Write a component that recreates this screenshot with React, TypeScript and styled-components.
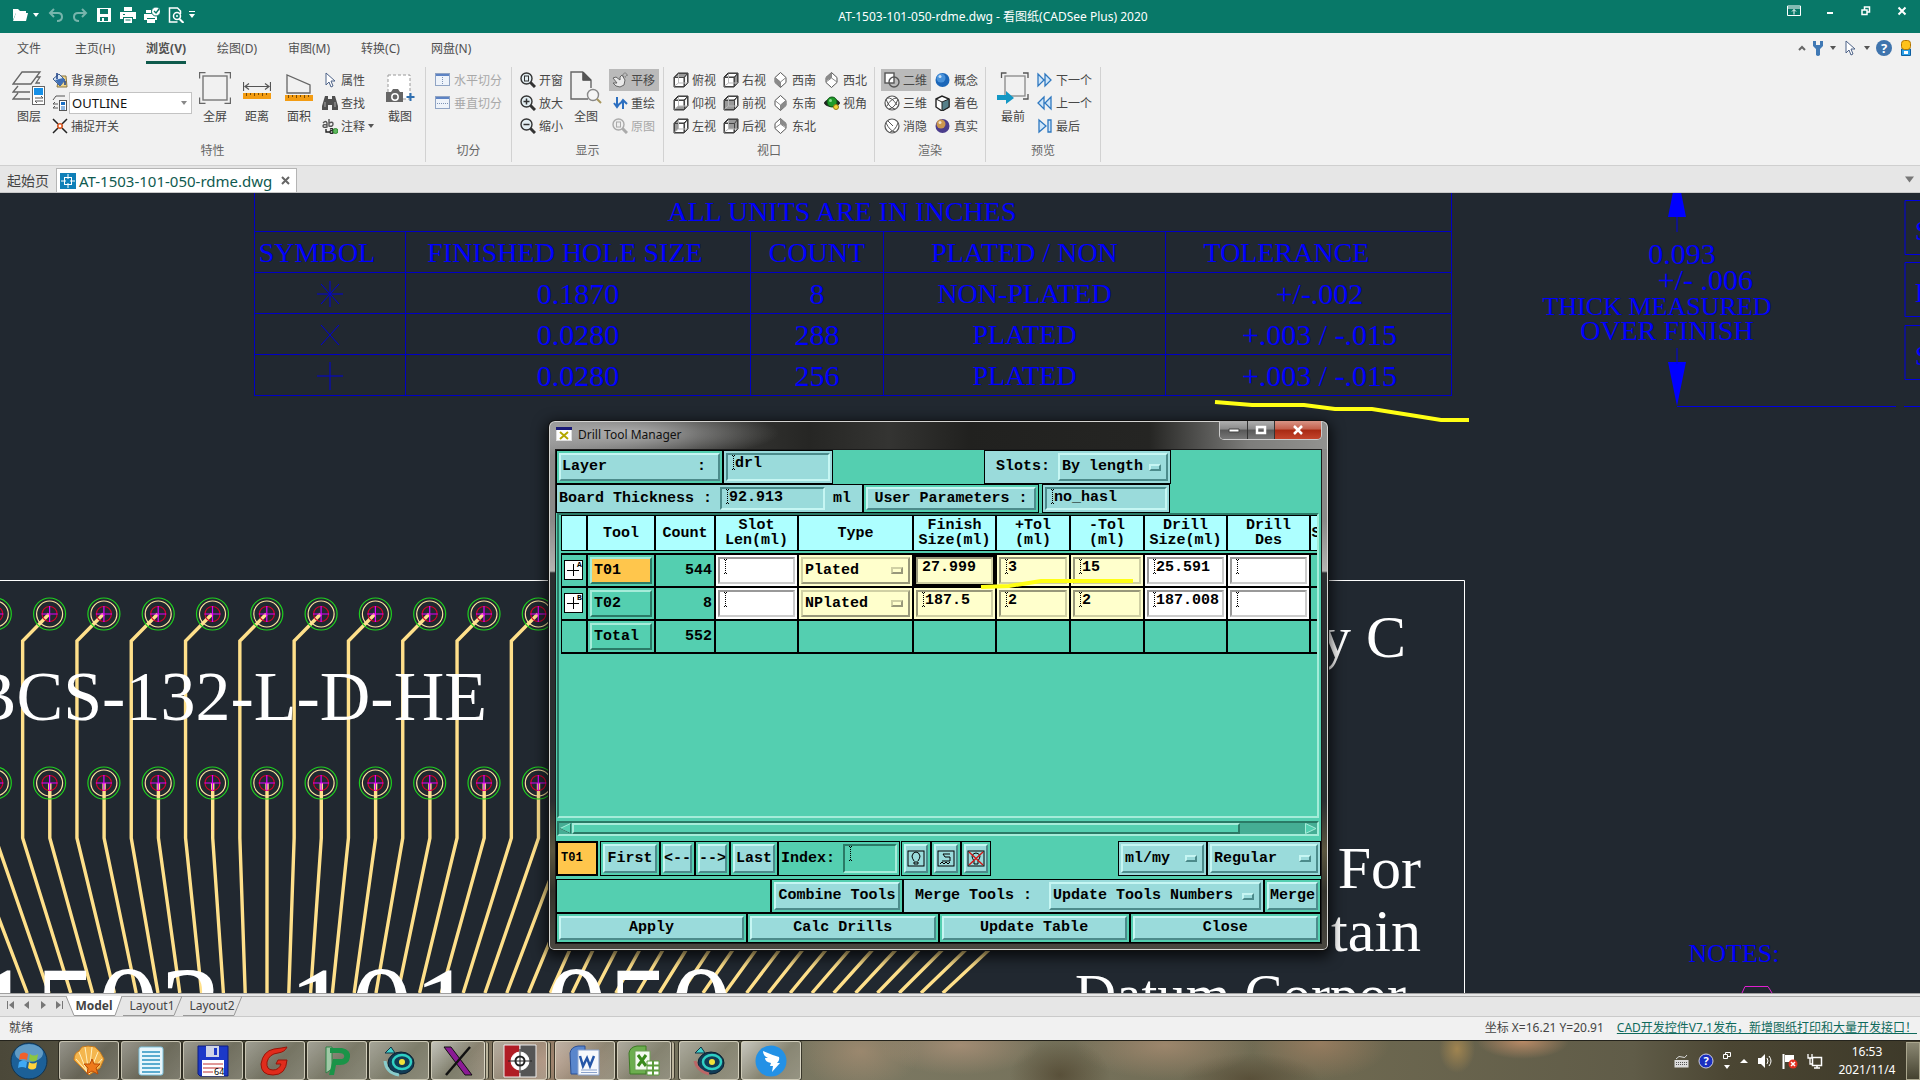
import React, { ReactNode } from 'react';
import styled, { createGlobalStyle, css } from 'styled-components';

const ui = `"Noto Sans", "Noto Sans CJK SC", sans-serif`;
const mono = `"Liberation Mono", "Noto Sans CJK SC", monospace`;
const cad = `"Liberation Serif", "Noto Sans CJK SC", serif`;

const Global = createGlobalStyle`
  *, *::before, *::after { box-sizing: border-box; }
  html, body { margin: 0; height: 100%; overflow: hidden; }
  button, input, select { font: inherit; color: inherit; margin: 0; padding: 0; border: 0; background: none; border-radius: 0; outline: 0; }
  svg { display: block; flex: none; }
`;

const Page = styled.div`
  display: flex;
  flex-direction: column;
  height: 100vh;
  min-height: 600px;
  overflow: hidden;
  font-family: ${ui};
  font-size: 12px;
  color: #444;
  background: #f1f1f1;
`;

/* ---------- title bar ---------- */
const TitleBar = styled.header`
  flex: none;
  display: grid;
  grid-template-columns: 214px 1fr 148px;
  height: 33px;
  background: #087868;
  color: #fff;
`;
const QuickBar = styled.div`
  display: flex;
  align-items: center;
  gap: 8px;
  padding: 0 0 4px 12px;
`;
const QuickButton = styled.button<{ $dim?: boolean; $narrow?: boolean }>`
  display: grid;
  place-items: center;
  width: ${p => (p.$narrow ? 8 : 16)}px;
  height: 20px;
  margin-left: ${p => (p.$narrow ? -4 : 0)}px;
  opacity: ${p => (p.$dim ? 0.45 : 1)};
`;
const TitleText = styled.h1`
  margin: 0;
  font-size: 12px;
  font-weight: 400;
  line-height: 33px;
  text-align: center;
  white-space: nowrap;
`;
const WindowButtons = styled.div`
  display: flex;
  justify-content: flex-end;
`;
const WindowButton = styled.button`
  display: grid;
  place-items: center;
  width: 36px;
  height: 21px;
`;

/* ---------- menu ---------- */
const MenuBar = styled.nav`
  flex: none;
  display: flex;
  align-items: stretch;
  height: 34px;
  padding: 0 6px 0 17px;
  gap: 31px;
`;
const MenuTab = styled.button<{ $active?: boolean }>`
  height: 31px;
  padding-top: 4px;
  line-height: 24px;
  white-space: nowrap;
  color: #505050;
  border-bottom: 3px solid ${p => (p.$active ? '#0f5a4c' : 'transparent')};
  font-weight: ${p => (p.$active ? 700 : 400)};
  &:first-child { margin-right: 3px; }
`;
const MenuTools = styled.div`
  display: flex;
  align-items: center;
  gap: 6px;
  margin-left: auto;
  padding-bottom: 4px;
`;
const ToolButton = styled.button`
  display: grid;
  place-items: center;
`;

/* ---------- ribbon ---------- */
const RibbonBar = styled.section`
  flex: none;
  display: flex;
  height: 98px;
`;
const Group = styled.div<{ $w: number }>`
  display: flex;
  flex-direction: column;
  width: ${p => p.$w}px;
  height: 95px;
  border-right: 1px solid #d2d2d2;
`;
const GroupBody = styled.div<{ $pad: number; $gap?: number }>`
  display: flex;
  flex: none;
  height: 71px;
  padding: 2px 0 0 ${p => p.$pad}px;
  gap: ${p => p.$gap ?? 4}px;
`;
const GroupLabel = styled.div`
  padding-top: 3px;
  line-height: 20px;
  text-align: center;
  color: #666;
`;
const LargeButton = styled.button`
  display: flex;
  flex-direction: column;
  align-items: center;
  width: 38px;
  height: 60px;
  line-height: 22px;
`;
const IconSlot = styled.span`
  display: grid;
  place-items: center;
  width: 36px;
  height: 37px;
`;
const Stack = styled.div<{ $w: number }>`
  display: flex;
  flex-direction: column;
  gap: 1px;
  width: ${p => p.$w}px;
`;
const SmallButton = styled.button<{ $on?: boolean; $off?: boolean; $flush?: boolean }>`
  display: flex;
  align-items: center;
  gap: 3px;
  height: 22px;
  padding: 0 ${p => (p.$flush ? 0 : 3)}px;
  white-space: nowrap;
  background: ${p => (p.$on ? '#bababa' : 'transparent')};
  color: ${p => (p.$off ? '#a8a8a8' : '#484848')};
`;
const StyleRow = styled.label`
  display: flex;
  align-items: center;
  gap: 1px;
  height: 22px;
`;
const StyleBox = styled.span`
  display: flex;
  align-items: center;
  flex: 1;
  height: 22px;
  padding-right: 4px;
  border: 1px solid #c3c3c3;
  background: #fff;
`;
const StyleSelect = styled.select`
  flex: 1;
  appearance: none;
  padding-left: 2px;
  font-size: 13px;
  color: #111;
`;

/* ---------- document tabs ---------- */
const DocTabs = styled.div`
  flex: none;
  display: flex;
  align-items: flex-end;
  height: 28px;
  padding-right: 6px;
  border-top: 1px solid #cfcfcf;
  border-bottom: 1px solid #c8c8c8;
  background: #e6e6e6;
`;
const StartTab = styled.button`
  width: 56px;
  height: 24px;
  font-size: 14px;
`;
const DocTab = styled.div`
  display: flex;
  align-items: center;
  gap: 3px;
  width: 241px;
  height: 24px;
  padding: 0 6px 0 3px;
  border: 1px solid #b5b5b5;
  border-bottom: 0;
  background: #fff;
  color: #0f5a50;
  font-size: 15px;
`;
const DocName = styled.button`
  flex: 1;
  text-align: left;
  line-height: 22px;
`;
const TabsMore = styled.button`
  align-self: center;
  margin-left: auto;
`;

/* ---------- drawing area ---------- */
const Workspace = styled.main`
  position: relative;
  flex: 1;
  min-height: 0;
  overflow: hidden;
  background: #212830;
`;
const Sheet = styled.svg`
  position: absolute;
  inset: 0;
  width: 100%;
  height: 100%;
  font-family: ${cad};
`;
const HoleChart = styled.table`
  position: absolute;
  left: 254px;
  top: -3px;
  width: 1198px;
  table-layout: fixed;
  border-collapse: collapse;
  font-family: ${cad};
  font-size: 28px;
  line-height: 32px;
  color: #0000ff;
  white-space: nowrap;
  th, td {
    height: 41px;
    padding: 5px 0 3px;
    border: 1px solid #0000c4;
    font-weight: 400;
    text-align: center;
  }
  td:not(:nth-child(4)) { font-size: 30px; }
  th[scope='colgroup'] { padding-right: 22px; }
  th[scope='col']:first-child, th[scope='col']:nth-child(2) { padding-right: 26px; }
  th[scope='col']:last-child { padding-right: 44px; }
  td:last-child { padding-left: 22px; }
  caption { display: none; }
`;
const Mark = styled.svg`
  margin: 0 auto;
`;

/* ---------- drill tool manager ---------- */
const GREEN = '#54cfb0';
const PALE = '#9adbdb';
const CREAM = '#ffffcc';

const Dialog = styled.section`
  position: absolute;
  left: 549px;
  top: 228px;
  width: 779px;
  padding: 0 6px 6px;
  border-radius: 6px 6px 5px 5px;
  background:
    radial-gradient(ellipse 150px 26px at 80px 12px, rgba(200, 200, 200, 0.75), transparent),
    linear-gradient(90deg, #8c8c8c 0, #3c3c3a 150px, #262624 260px, #343432 340px, #21211f 420px, #252523 600px, #7d7d7b 700px, #929290 100%) 0 0 / 100% 28px no-repeat,
    linear-gradient(180deg, #8a8a88 0, #8a8a88 100px, #b4b4b2 150px, #2b2e30 152px, #2b2f31 380px, #5b563f 430px, #34332c 470px, #4a4740 100%);
  box-shadow: inset 0 0 0 1px #d4d4d2, 0 0 0 1px #111, 0 4px 14px 3px rgba(0, 0, 0, 0.75);
  color: #000;
`;
const DialogTitle = styled.div`
  display: flex;
  align-items: flex-start;
  height: 28px;
`;
const DialogName = styled.h2`
  display: flex;
  align-items: center;
  gap: 6px;
  flex: 1;
  margin: 0;
  padding-left: 1px;
  height: 26px;
  font-size: 12px;
  font-weight: 400;
  color: #111;
`;
const Caption = styled.div`
  display: flex;
  height: 19px;
  border: 1px solid #ccc;
  border-top: 0;
  border-radius: 0 0 5px 5px;
  overflow: hidden;
`;
const CaptionButton = styled.button<{ $close?: boolean }>`
  display: grid;
  place-items: center;
  width: ${p => (p.$close ? 47 : 27)}px;
  background: ${p => (p.$close ? 'linear-gradient(#d99485 0, #c4604c 45%, #a82912 50%, #c4452c)' : 'linear-gradient(#b0b0b0 0, #8a8a8a 45%, #585858 50%, #777)')};
  & + & { border-left: 1px solid #333; }
`;
const Client = styled.div`
  display: flex;
  flex-direction: column;
  border: 1px solid #1b1b1b;
  background: ${GREEN};
  font-family: ${mono};
  font-size: 15px;
  font-weight: 700;
  line-height: 18px;
`;
const FormRow = styled.div<{ $cols: string; $h: number; $gapAbove?: boolean }>`
  display: grid;
  grid-template-columns: ${p => p.$cols};
  height: ${p => p.$h}px;
  margin-top: ${p => (p.$gapAbove ? 3 : 0)}px;
`;
const Panel = styled.div<{ $pale?: boolean }>`
  display: flex;
  align-items: center;
  gap: 8px;
  min-width: 0;
  padding: 2px;
  border: 1px solid #000;
  background: ${p => (p.$pale ? PALE : GREEN)};
  white-space: nowrap;
`;
const bevelUp = css`
  border: 2px solid;
  border-color: #c6f6f3 #4c8b8b #4c8b8b #c6f6f3;
`;
const MotifButton = styled.button<{ $between?: boolean }>`
  ${bevelUp}
  display: flex;
  align-items: center;
  justify-content: ${p => (p.$between ? 'space-between' : 'center')};
  flex: 1;
  align-self: stretch;
  min-width: 0;
  padding: 0 ${p => (p.$between ? 12 : 0)}px 0 ${p => (p.$between ? 1 : 0)}px;
  background: ${PALE};
  white-space: nowrap;
`;
const MenuBox = styled.span<{ $cream?: boolean }>`
  ${bevelUp}
  ${p => p.$cream && 'border-color: #d0d0a4 #98987a #98987a #d0d0a4;'}
  display: flex;
  align-items: center;
  flex: 1;
  align-self: stretch;
  min-width: 0;
  padding: 0 5px 0 2px;
  background: ${p => (p.$cream ? CREAM : PALE)};
`;
const MotifSelect = styled.select`
  appearance: none;
  flex: 1;
  min-width: 0;
`;
const Nub = styled.span<{ $cream?: boolean }>`
  width: 12px;
  height: 7px;
  border: 2px solid;
  border-color: ${p => (p.$cream ? '#d0d0a4 #98987a #98987a #d0d0a4' : '#c6f6f3 #4c8b8b #4c8b8b #c6f6f3')};
`;
const FieldBox = styled.span<{ $tone: 'pale' | 'green' | 'cream' | 'white'; $fill?: boolean }>`
  display: flex;
  align-items: flex-start;
  flex: ${p => (p.$fill ? '1' : 'none')};
  align-self: stretch;
  min-width: 0;
  padding-left: 4px;
  border: 2px solid;
  border-color: ${p => ({ pale: '#4c8b8b #c6f6f3 #c6f6f3 #4c8b8b', green: '#2a7a66 #a5ecd9 #a5ecd9 #2a7a66', cream: '#98987a #d0d0a4 #d0d0a4 #98987a', white: '#999 #ccc #ccc #999' })[p.$tone]};
  background: ${p => ({ pale: PALE, green: GREEN, cream: CREAM, white: '#fff' })[p.$tone]};
`;
const FieldInput = styled.input`
  flex: 1;
  width: 100%;
  min-width: 0;
  height: 17px;
  line-height: 17px;
`;
const TableFrame = styled.div`
  height: 305px;
  margin: 0 2px 0 1px;
  padding-left: 2px;
  border: 2px solid;
  border-color: #2a7a66 #a5ecd9 #a5ecd9 #2a7a66;
  overflow: hidden;
`;
const Tools = styled.table`
  width: 762px;
  table-layout: fixed;
  border-collapse: separate;
  border-spacing: 0;
  th { height: 36px; padding: 0; border: solid #000; border-width: 1px 2px 1px 0; background: #adffff; line-height: 15px; white-space: pre-line; font-weight: 700; }
  tbody::before { content: ''; display: table-row; height: 2px; }
  td { height: 33px; padding: 2px; border: solid #000; border-width: 0 2px 2px 0; }
  tbody tr:first-child td { border-top: 2px solid #000; height: 35px; }
  th:first-child, td:first-child { border-left: 1px solid #000; }
`;
const Td = styled.td<{ $tone?: string; $active?: boolean; $right?: boolean }>`
  background: ${p => p.$tone ?? GREEN};
  text-align: ${p => (p.$right ? 'right' : 'left')};
  ${p => p.$active && 'box-shadow: inset 0 0 0 3px #000;'}
`;
const CellFill = styled.div`
  display: flex;
  height: 27px;
`;
const ToolButtonCell = styled.button<{ $hot?: boolean }>`
  flex: 1;
  padding-left: 2px;
  text-align: left;
  border: 2px solid;
  border-color: #a5ecd9 #2a7a66 #2a7a66 #a5ecd9;
  background: ${p => (p.$hot ? '#ffc64c' : GREEN)};
`;
const Trough = styled.div`
  display: flex;
  align-items: stretch;
  height: 15px;
  margin: 3px 2px 5px 1px;
  border: 2px solid;
  border-color: #2a7a66 #a5ecd9 #a5ecd9 #2a7a66;
  background: #45ad94;
`;
const Thumb = styled.button`
  flex: 0 1 668px;
  margin-right: auto;
  border: 2px solid;
  border-color: #a5ecd9 #2a7a66 #2a7a66 #a5ecd9;
  background: ${GREEN};
`;
const ToolTag = styled.div`
  padding-left: 3px;
  border: 2px solid #000;
  background: #ffc64c;
  font-size: 12px;
  line-height: 30px;
`;

/* ---------- footer ---------- */
const LayoutTabs = styled.div`
  flex: none;
  display: flex;
  height: 24px;
  padding-left: 7px;
  border-top: 1px solid #a0a0a0;
  border-bottom: 1px solid #cacaca;
  box-shadow: inset 0 2px #e8e8e8, inset 0 3px #a8a8a8;
  background: #e6e6e6;
`;
const PageArrows = styled.div`
  display: flex;
  align-items: center;
  gap: 8px;
  width: 59px;
`;
const LayoutTab = styled.button<{ $active?: boolean; $w: number }>`
  position: relative;
  width: ${p => p.$w}px;
  height: 20px;
  margin-top: 2px;
  line-height: 18px;
  font-weight: ${p => (p.$active ? 700 : 400)};
  color: #444;
  svg { position: absolute; inset: 0; }
  span { position: relative; }
`;
const StatusBar = styled.footer`
  flex: none;
  display: flex;
  align-items: center;
  justify-content: space-between;
  height: 23px;
  padding: 0 3px 1px 9px;
  line-height: 18px;
`;
const StatusRight = styled.div`
  display: flex;
  gap: 13px;
`;
const NewsLink = styled.a`
  color: #0f6a5c;
`;
const TaskBar = styled.div`
  flex: none;
  display: flex;
  justify-content: space-between;
  height: 40px;
  border-top: 1px solid #24231c;
  background:
    radial-gradient(ellipse 90px 60px at 545px 20px, rgba(176, 138, 116, 0.8), transparent),
    radial-gradient(ellipse 60px 40px at 860px 10px, rgba(176, 146, 118, 0.6), transparent),
    radial-gradient(ellipse 80px 30px at 960px 4px, rgba(190, 155, 130, 0.6), transparent),
    radial-gradient(ellipse 50px 36px at 1060px 34px, rgba(70, 58, 36, 0.6), transparent),
    radial-gradient(ellipse 90px 34px at 1165px 4px, rgba(185, 150, 122, 0.6), transparent),
    radial-gradient(ellipse 70px 26px at 1250px 38px, rgba(74, 62, 40, 0.6), transparent),
    radial-gradient(ellipse 70px 36px at 1320px 2px, rgba(176, 136, 104, 0.6), transparent),
    radial-gradient(ellipse 18px 24px at 1457px 8px, #a08450, transparent),
    radial-gradient(ellipse 46px 18px at 1523px 0, #b98a66, transparent),
    linear-gradient(90deg, #4b4839, #6b6a55 20%, #7b7862 45%, #6d6850 70%, #605c48 85%, #4b4633 90%, #3d3929);
`;
const TaskItems = styled.div`
  display: flex;
  gap: 2px;
`;
const StartOrb = styled.button`
  display: grid;
  place-items: center;
  width: 57px;
`;
const TaskButton = styled.button<{ $stack?: boolean; $bright?: boolean }>`
  display: grid;
  place-items: center;
  width: ${p => (p.$stack ? 54 : 60)}px;
  margin-right: ${p => (p.$stack ? 6 : 0)}px;
  height: 39px;
  border: 1px solid rgba(240, 235, 215, 0.65);
  border-radius: 3px;
  background: linear-gradient(135deg, rgba(255, 255, 255, ${p => (p.$bright ? 0.6 : 0.4)}), rgba(255, 255, 255, 0.12) 55%, rgba(255, 255, 255, 0.22));
  box-shadow: 0 0 0 1px rgba(30, 28, 20, 0.7)${p => (p.$stack ? ', 4px 0 0 -1px #bbb49c, 5px 0 0 -1px #3c392c' : '')};
`;
const Tray = styled.div`
  display: flex;
  align-items: center;
  gap: 9px;
  color: #fff;
`;
const TrayStack = styled.div`
  display: grid;
  gap: 5px;
  justify-items: center;
`;
const Clock = styled.div`
  width: 70px;
  margin-right: -5px;
  text-align: center;
  line-height: 18px;
`;
const ShowDesktop = styled.button`
  width: 14px;
  height: 38px;
  border: 1px solid #aaa68e;
  background: linear-gradient(#8b8873, #454230);
`;

/* ---------- icons ---------- */
const Ico = ({ w = 16, h = w, children, vb }: { w?: number; h?: number; vb?: string; children: ReactNode }) => (
  <svg width={w} height={h} viewBox={vb ?? `0 0 ${w} ${h}`} fill="none" stroke="#555" strokeWidth="1" aria-hidden="true">{children}</svg>
);
const Drop = ({ c = '#555', w = 6 }: { c?: string; w?: number }) => (
  <svg width={w} height={w} viewBox="0 0 6 6" aria-hidden="true"><path d="M0 1h6L3 5z" fill={c} /></svg>
);
const Cube = ({ face }: { face: string }) => {
  const fills: Record<string, string> = { top: 'M1 5l4-4h10l-4 4z', bottom: 'M1 15l4-4h10l-4 4z', left: 'M1 5l4-4v10l-4 4z', right: 'M11 5l4-4v10l-4 4z', front: 'M1 5h10v10H1z', back: 'M5 1h10v10H5z' };
  return (
    <Ico>
      <path d="M1 5h10v10H1zM1 5l4-4h10l-4 4M15 1v10l-4 4" fill="#fff" stroke="#333" />
      <path d={fills[face]} fill="#9a9a9a" stroke="none" />
      <path d="M1.500 5.500h10v9h-10zM1.500 5.500l4-4h9v9l-3 4M11.500 5.500l3-4" stroke="#444" />
      <path d="M5.500 2v9h9M5.500 11l-4 3" stroke="#bbb" />
    </Ico>
  );
};
const Gem = ({ q }: { q: number }) => {
  const parts = ['M2 5l5.500 5v5.500L2 10z', 'M13 5l-5.500 5v5.500L13 10z', 'M7.500 .5L13 5v4L7.500 6z', 'M7.500 .5L2 5v4l5.500-3z'];
  return (
    <Ico>
      <path d="M7.500 .5l5.500 5v5l-5.500 5-5.500-5v-5z" fill="#fff" stroke="#555" />
      <path d={parts[q]} fill="#8a8a8a" stroke="none" />
      <path d={q < 2 ? 'M2 5.500l5.500 4.500 5.500-4.500M7.500 10v5' : 'M7.500 1v5M2 10l5.500-4 5.500 4'} stroke="#888" />
    </Ico>
  );
};
const Lens = ({ kind, dim }: { kind: 'box' | 'plus' | 'minus'; dim?: boolean }) => (
  <Ico>
    <g stroke={dim ? '#aaa' : '#333'}>
      <circle cx="6.500" cy="6.500" r="5.500" fill={dim ? '#eee' : '#e3eef2'} strokeWidth="1.4" />
      <path d="M10.500 10.500l4.500 4.500" strokeWidth="3" />
      {kind === 'box' ? <rect x="4.500" y="4" width="4" height="5" /> : <path d={kind === 'plus' ? 'M3.500 6.500h6M6.500 3.500v6' : 'M3.500 6.500h6'} strokeWidth="1.5" />}
    </g>
  </Ico>
);
const Split = ({ v }: { v?: boolean }) => (
  <Ico>
    <rect x=".5" y="1.500" width="14" height="12" fill="#eef3fa" stroke="#90a4c4" />
    <path d="M1 3h13" stroke="#5d83c4" strokeWidth="2" />
    <path d={v ? 'M7.500 5v8' : 'M2 8.500h12'} stroke="#7d92b5" strokeDasharray="1 1" />
  </Ico>
);
const Ball = ({ a, b }: { a: string; b: string }) => (
  <Ico><circle cx="7.500" cy="8" r="7" fill={b} stroke="none" /><circle cx="6" cy="6" r="4.500" fill={a} stroke="none" opacity=".75" /><circle cx="5" cy="4.500" r="1.500" fill="#fff" opacity=".7" stroke="none" /></Ico>
);
const Wire = ({ hidden }: { hidden?: boolean }) => (
  <Ico><circle cx="8" cy="8" r="7" fill="#fff" stroke="#555" strokeWidth="1.2" /><path d={hidden ? 'M2 5q4 8 9 9M14 5q-3 8-8 9M4 3l5 5' : 'M2 4q3 9 9 10M14 4q-3 9-9 10M3 3q5-1 10 7M13 3q-6 0-10 8'} /></Ico>
);
const Frames = ({ w = 32 }: { w?: number }) => (
  <Ico w={w} vb="0 0 32 32"><path d="M.5 6.500v-6h6M25.500.5h6v6M31.500 25.500v6h-6M6.500 31.500h-6v-6" stroke="#666" strokeWidth="1.400" /><rect x="4" y="4" width="24" height="24" stroke="#777" strokeWidth="1.400" /></Ico>
);
const Ruler = () => (
  <g><path d="M0 19h28v6H0z" fill="#f39c12" stroke="none" /><path d="M3.500 19v3M7.500 19v2M11.500 19v3M15.500 19v2M19.500 19v3M23.500 19v2" stroke="#7a4a00" /></g>
);
const Seek = ({ d }: { d: string }) => <Ico><path d={d} fill="#cfe6fa" stroke="#2e78c0" strokeWidth="1.300" /></Ico>;
const Pointer = () => <Ico><path d="M4 1v12l3-3 2 5 2-1-2-5h4z" fill="#fff" stroke="#4d6288" /></Ico>;

const icons = {
  layers: <Ico w={34} h={34}><path d="M10 1h18l-9 12H1zM6 15l-5 6h17M6 22l-5 6h17M24 6l4 0-4 6h4" stroke="#666" strokeWidth="1.300" /><rect x="20.500" y="15.500" width="12" height="18" fill="#fff" stroke="#666" /><rect x="22" y="17" width="9" height="7" fill="#1590e8" stroke="none" /><path d="M23 27h8l-2-2M31 30h-8l2 2" /></Ico>,
  paint: <Ico><path d="M7 4h7l1 11H5z" fill="#f0d78c" stroke="#8a7440" /><path d="M1 7l6-5 6 6-5 6z" fill="#dfeaf8" stroke="#40608f" /><path d="M3 8l8-2 2 2-5 6z" fill="#3f6fb5" stroke="none" /><path d="M5 1v6M13 9v4" stroke="#1b3f86" strokeWidth="1.500" /></Ico>,
  styles: <Ico><path d="M4 1h9M1 5l3-4M3 7L1 9h5M3 11l-2 2h5" /><rect x="7.500" y="5.500" width="7" height="10" fill="#fff" stroke="#555" /><rect x="9" y="7" width="4" height="3" fill="#1a6fc4" stroke="none" /><path d="M9 12h4M9 14h4" stroke="#1a6fc4" /></Ico>,
  snap: <Ico><path d="M1 1l5 5M15 1l-5 5M1 15l5-5M15 15l-5-5" stroke="#222" strokeWidth="1.500" /><circle cx="8" cy="8" r="2.200" stroke="#d8551e" strokeWidth="1.600" fill="#fff" /></Ico>,
  dist: <Ico w={28} h={28}><path d="M.5 8v9M27.500 8v9M2 12.500h24M6 9.500l-4 3 4 3M22 9.500l4 3-4 3" stroke="#555" strokeWidth="1.200" /><Ruler /></Ico>,
  area: <Ico w={28} h={30} vb="0 -3 28 30"><path d="M2 -1v18h23v-8z" stroke="#666" strokeWidth="1.300" /><Ruler /></Ico>,
  find: <Ico><path d="M3 1h3v3h4V1h3l3 10v4h-6v-5H6v5H0v-4z" fill="#4f4f4f" stroke="none" /><path d="M3 7v5M13 7v5" stroke="#aaa" /></Ico>,
  note: <Ico><path d="M1 5q3-3 4 0v4q-4 1-4-1t4-1M7 1v7q4 1 4-2t-4-1" stroke="#555" strokeWidth="1.400" /><path d="M4 11v3h4M8 11q3-1 3 1v3q-3 1-3-1t3-1" stroke="#222" strokeWidth="1.400" /><circle cx="13.500" cy="13" r="2.500" fill="#5eb65e" stroke="#2f8f2f" /></Ico>,
  shot: <Ico w={30} h={30}><rect x="3" y="2" width="22" height="24" fill="#fff" stroke="#999" strokeDasharray="3 2" /><path d="M1 19h5l2-3h5l2 3h3v10H1z" fill="#666" stroke="none" /><circle cx="10" cy="24" r="3.200" stroke="#fff" strokeWidth="1.500" /><path d="M25.500 20v8M21.500 24h8" stroke="#2f6fb0" strokeWidth="2" /></Ico>,
  sheet: <Ico w={34} h={34}><path d="M14 1H2v27h17M14 1l8 8v8M14 1v8h8" stroke="#666" strokeWidth="1.400" /><path d="M14 1l8 8h-8z" fill="#555" /><circle cx="24" cy="24" r="5.500" fill="#f5f5f5" stroke="#888" strokeWidth="1.400" /><path d="M28 28l4 4" stroke="#a7965c" strokeWidth="2" /></Ico>,
  pan: <Ico><path d="M1 6l3-1 4 3V5l2-2 3 5-1 5-4 2-4-1-3-3 4 0z" fill="#e9e9e9" stroke="#666" /><circle cx="13" cy="3" r="2" stroke="#555" strokeDasharray="1 1" /></Ico>,
  redraw: <Ico><path d="M5 2v9M2 8l3 4 3-4" stroke="#2c6fc0" strokeWidth="2" /><path d="M11 14V6M8 9l3-4 4 4" stroke="#2c6fc0" strokeWidth="2" /></Ico>,
  orbit: <Ico><ellipse cx="8" cy="8" rx="7.500" ry="3.500" fill="#222" stroke="#222" /><circle cx="8" cy="7" r="5" fill="#1f9a2a" stroke="#0e5514" /><circle cx="6.500" cy="5.500" r="1.500" fill="#8be08f" stroke="none" /><circle cx="12" cy="12" r="2.500" fill="#f2d43a" stroke="#9a7b10" /></Ico>,
  flat: <Ico><rect x="1" y="1" width="9" height="10" fill="#fff" strokeWidth="1.400" /><circle cx="10" cy="10" r="5" strokeWidth="1.400" /></Ico>,
  shade: <Ico><path d="M1 4l6-3 7 3v8l-7 4-6-4z" fill="#fff" stroke="#222" strokeWidth="1.400" /><path d="M7 7l7-3v8l-7 4z" fill="#57808a" stroke="#222" /><path d="M1 4l6 3" stroke="#222" /></Ico>,
  last: <Seek d="M2 2l7 6-7 6zM11 2h3v12h-3z" />,
  first: <Ico w={34} h={34}><path d="M5.500 7V2h5M27 2h5v5M32 23v5h-5" stroke="#555" strokeWidth="1.300" /><rect x="9" y="5" width="20" height="20" stroke="#888" strokeWidth="1.300" /><path d="M1 24h9v-4l8 7-8 6v-4H1z" fill="#1397c4" stroke="none" /></Ico>,
};

const Small = ({ icon, text, ...rest }: { icon: ReactNode; text: string; $on?: boolean; $off?: boolean; $flush?: boolean; drop?: boolean }) => {
  const { drop, ...style } = rest;
  return <SmallButton {...style}>{icon}<span>{text}</span>{drop && <Drop />}</SmallButton>;
};
const Large = ({ icon, text }: { icon: ReactNode; text: string }) => (
  <LargeButton><IconSlot>{icon}</IconSlot>{text}</LargeButton>
);

const Ribbon = () => (
  <RibbonBar>
    <Group $w={426}>
      <GroupBody $pad={10}>
        <Large icon={icons.layers} text="图层" />
        <Stack $w={140}>
          <Small $flush icon={icons.paint} text="背景颜色" />
          <StyleRow>{icons.styles}<StyleBox><StyleSelect aria-label="图层样式"><option>OUTLINE</option></StyleSelect><Drop c="#888" /></StyleBox></StyleRow>
          <Small $flush icon={icons.snap} text="捕捉开关" />
        </Stack>
        <Large icon={<Frames />} text="全屏" />
        <Large icon={icons.dist} text="距离" />
        <Large icon={icons.area} text="面积" />
        <Stack $w={55}>
          <Small $flush icon={<Pointer />} text="属性" />
          <Small $flush icon={icons.find} text="查找" />
          <Small $flush icon={icons.note} text="注释" drop />
        </Stack>
        <Large icon={icons.shot} text="截图" />
      </GroupBody>
      <GroupLabel>特性</GroupLabel>
    </Group>
    <Group $w={86}>
      <GroupBody $pad={6}>
        <Stack $w={76}>
          <Small $off icon={<Split v />} text="水平切分" />
          <Small $off icon={<Split />} text="垂直切分" />
        </Stack>
      </GroupBody>
      <GroupLabel>切分</GroupLabel>
    </Group>
    <Group $w={152}>
      <GroupBody $pad={8}>
        <Stack $w={43}>
          <Small $flush icon={<Lens kind="box" />} text="开窗" />
          <Small $flush icon={<Lens kind="plus" />} text="放大" />
          <Small $flush icon={<Lens kind="minus" />} text="缩小" />
        </Stack>
        <Large icon={icons.sheet} text="全图" />
        <Stack $w={50}>
          <Small $on icon={icons.pan} text="平移" />
          <Small icon={icons.redraw} text="重绘" />
          <Small $off icon={<Lens kind="box" dim />} text="原图" />
        </Stack>
      </GroupBody>
      <GroupLabel>显示</GroupLabel>
    </Group>
    <Group $w={211}>
      <GroupBody $pad={6} $gap={1}>
        <Stack $w={49}>
          <Small icon={<Cube face="top" />} text="俯视" />
          <Small icon={<Cube face="bottom" />} text="仰视" />
          <Small icon={<Cube face="left" />} text="左视" />
        </Stack>
        <Stack $w={49}>
          <Small icon={<Cube face="right" />} text="右视" />
          <Small icon={<Cube face="front" />} text="前视" />
          <Small icon={<Cube face="back" />} text="后视" />
        </Stack>
        <Stack $w={50}>
          <Small icon={<Gem q={0} />} text="西南" />
          <Small icon={<Gem q={1} />} text="东南" />
          <Small icon={<Gem q={2} />} text="东北" />
        </Stack>
        <Stack $w={49}>
          <Small icon={<Gem q={3} />} text="西北" />
          <Small icon={icons.orbit} text="视角" />
        </Stack>
      </GroupBody>
      <GroupLabel>视口</GroupLabel>
    </Group>
    <Group $w={111}>
      <GroupBody $pad={6} $gap={1}>
        <Stack $w={50}>
          <Small $on icon={icons.flat} text="二维" />
          <Small icon={<Wire />} text="三维" />
          <Small icon={<Wire hidden />} text="消隐" />
        </Stack>
        <Stack $w={50}>
          <Small icon={<Ball a="#5aa2e6" b="#1b66b8" />} text="概念" />
          <Small icon={icons.shade} text="着色" />
          <Small icon={<Ball a="#f6b53a" b="#4b3d8c" />} text="真实" />
        </Stack>
      </GroupBody>
      <GroupLabel>渲染</GroupLabel>
    </Group>
    <Group $w={115}>
      <GroupBody $pad={8} $gap={2}>
        <Large icon={icons.first} text="最前" />
        <Stack $w={62}>
          <Small icon={<Seek d="M1 2l6 6-6 6zM8 2l6 6-6 6z" />} text="下一个" />
          <Small icon={<Seek d="M7 2L1 8l6 6zM14 2L8 8l6 6z" />} text="上一个" />
          <Small icon={icons.last} text="最后" />
        </Stack>
      </GroupBody>
      <GroupLabel>预览</GroupLabel>
    </Group>
  </RibbonBar>
);

/* ---------- CAD sheet ---------- */
const BLUE = '#0000ff';
const PITCH = 54.3;
const MID = 267;
const lanes = Array.from({ length: 46 }, (_, i) => i - 14);
const pads = Array.from({ length: 12 }, (_, i) => 49.6 + PITCH * (i - 1));

const Pad = ({ x, y }: { x: number; y: number }) => (
  <g fill="none">
    <circle cx={x} cy={y} r="16" stroke="#1fd01f" strokeWidth="1.200" />
    <circle cx={x} cy={y} r="13" stroke="#ffe3a0" strokeWidth="1.200" />
    <circle cx={x} cy={y} r="7.500" stroke="#d4002a" strokeWidth="1.200" />
    <path d={`M${x - 8} ${y}h16M${x} ${y - 8}v16`} stroke="#e000ff" strokeWidth="1.200" />
  </g>
);

const Drawing = () => (
  <Sheet role="img" aria-label="CAD drawing">
    <g stroke="#ffe08a" strokeWidth="3.400" fill="none">
      {lanes.map(k => {
        const x = MID + k * PITCH / 2;
        const end = MID + k * 21.8;
        const head = k % 2 === 0 ? `M${x} 590` : `M${x + 26.5} 421L${x} 448`;
        return <path key={k} d={`${head}L${x} 645L${end} 800`} />;
      })}
    </g>
    {pads.map(x => <Pad key={x} x={x} y={421} />)}
    {pads.map(x => <Pad key={x} x={x} y={590} />)}
    <path d="M0 387.500H1464.500V800" fill="none" stroke="#fff" />
    <g fill="#fff">
      <text x="487" y="527" fontSize="70" textAnchor="end">BCS-132-L-D-HE</text>
      <g fontSize="125">
        <text x="-28" y="860">1503</text>
        <text x="288" y="860">101</text>
        <text x="545" y="860">050</text>
      </g>
      <g fontSize="60">
        <text x="1406" y="464" textAnchor="end">y C</text>
        <text x="1421" y="695" textAnchor="end">For</text>
        <text x="1421" y="758" textAnchor="end">tain</text>
      </g>
      <text x="1075" y="821" fontSize="57">Datum Corpor</text>
    </g>
    <g fill={BLUE} fontSize="28">
      <text x="1682" y="71" textAnchor="middle" fontSize="30">0.093</text>
      <text x="1753" y="97" textAnchor="end" fontSize="30">+/- .006</text>
      <text x="1657" y="122" textAnchor="middle" fontSize="26">THICK MEASURED</text>
      <text x="1667" y="147" textAnchor="middle">OVER FINISH</text>
      <text x="1734" y="769" textAnchor="middle" fontSize="26">NOTES:</text>
      <text x="1915" y="47">S</text>
      <text x="1915" y="109">F</text>
      <text x="1915" y="172">S</text>
      <path d="M1673-1h8l5 25h-18zM1668 169h18l-9 44z" />
    </g>
    <path d="M1677 24v15M1677 155v16M1677 213.500h219M1904 213.500h16M1920 7.500h-15v54h15M1920 69.500h-15v54h15M1920 132.500h-15v54h15" stroke="#0000e0" fill="none" />
    <path d="M1742 800l3-6.500h23l4 6.500" stroke="#e01fd0" fill="none" />
  </Sheet>
);

const marks = ['M0 14h26M13 1v26M4 4l18 20M22 4L4 24', 'M4 4l18 20M22 4L4 24', 'M0 14h26M13 0v28'];
const holes = [
  ['0.1870', '8', 'NON-PLATED', '+/-.002'],
  ['0.0280', '288', 'PLATED', '+.003 / -.015'],
  ['0.0280', '256', 'PLATED', '+.003 / -.015'],
];
const Holes = () => (
  <HoleChart>
    <caption>Drill chart</caption>
    <colgroup><col width="151" /><col width="345" /><col width="133" /><col width="282" /><col /></colgroup>
    <thead>
      <tr><th colSpan={5} scope="colgroup">ALL UNITS ARE IN INCHES</th></tr>
      <tr>{['SYMBOL', 'FINISHED HOLE SIZE', 'COUNT', 'PLATED / NON', 'TOLERANCE'].map(h => <th key={h} scope="col">{h}</th>)}</tr>
    </thead>
    <tbody>
      {holes.map((row, i) => (
        <tr key={i}>
          <td><Mark width="26" height="28" stroke="#0000d8" fill="none"><path d={marks[i]} /></Mark></td>
          {row.map((c, j) => <td key={j}>{c}</td>)}
        </tr>
      ))}
    </tbody>
  </HoleChart>
);

/* ---------- dialog ---------- */
const Caret = () => <svg width="3" height="15" aria-hidden="true"><path d="M0 .5h3M0 14.500h3M1.500 1v13" stroke="#000" strokeDasharray="1 1" /></svg>;
const Field = ({ label, value, tone, fill, bare }: { label: string; value: string; tone: 'pale' | 'green' | 'cream' | 'white'; fill?: boolean; bare?: boolean }) => (
  <FieldBox $tone={tone} $fill={fill}>{!bare && <Caret />}<FieldInput aria-label={label} defaultValue={value} /></FieldBox>
);
const Choice = ({ label, value, cream }: { label: string; value: string; cream?: boolean }) => (
  <MenuBox $cream={cream}><MotifSelect aria-label={label}><option>{value}</option></MotifSelect><Nub $cream={cream} /></MenuBox>
);
const ToolSymbol = ({ tag }: { tag: string }) => (
  <svg width="21" height="21" aria-hidden="true"><rect x=".5" y=".5" width="18" height="19" fill="#fff" stroke="#000" /><path d="M3 10.500h12M9.500 4v12" stroke="#000" /><text x="13" y="7" fontSize="8" fontWeight="700">{tag}</text></svg>
);

const headings = ['', 'Tool', 'Count', 'Slot\nLen(ml)', 'Type', 'Finish\nSize(ml)', '+Tol\n(ml)', '-Tol\n(ml)', 'Drill\nSize(ml)', 'Drill\nDes', 'S'];
const widths = [27, 68, 60, 83, 115, 83, 74, 74, 83, 83, 12];
const tools = [
  { tag: 'A', id: 'T01', count: 544, type: 'Plated', finish: '27.999', plus: '3', minus: '15', drill: '25.591' },
  { tag: 'B', id: 'T02', count: 8, type: 'NPlated', finish: '187.5', plus: '2', minus: '2', drill: '187.008' },
];

const DrillManager = () => (
  <Dialog role="dialog" aria-label="Drill Tool Manager">
    <DialogTitle>
      <DialogName>
        <Ico w={16}><rect x=".5" y="1.500" width="15" height="13" fill="#fff" stroke="#ddd" /><path d="M0 1h16v3H0z" fill="#1a1a78" stroke="none" /><path d="M4 6l8 7M12 6l-8 7" stroke="#b3a800" strokeWidth="2" /></Ico>
        Drill Tool Manager
      </DialogName>
      <Caption>
        <CaptionButton aria-label="Minimize"><svg width="12" height="5"><path d="M1 1h10v3H1z" fill="#fff" stroke="#444" /></svg></CaptionButton>
        <CaptionButton aria-label="Maximize"><svg width="12" height="10"><path d="M2 2h8v6H2z" fill="none" stroke="#fff" strokeWidth="2.500" /></svg></CaptionButton>
        <CaptionButton $close aria-label="Close window"><svg width="12" height="10"><path d="M2 1l8 8M10 1L2 9" stroke="#fff" strokeWidth="2.500" /></svg></CaptionButton>
      </Caption>
    </DialogTitle>
    <Client>
      <FormRow $cols="167px 110px 1fr 187px 150px" $h={34}>
        <Panel><MotifButton $between><span>Layer</span><span>:</span></MotifButton></Panel>
        <Panel $pale><Field fill label="Layer name" value="drl" tone="pale" /></Panel>
        <span />
        <Panel $pale><span>&nbsp;Slots:</span><Choice label="Slots" value="By length" /></Panel>
      </FormRow>
      <FormRow $cols="307px 176px 3px 128px 1fr" $h={29}>
        <Panel $pale><span>Board Thickness : </span><Field fill label="Board Thickness" value="92.913" tone="pale" /><span>ml&nbsp;</span></Panel>
        <Panel><MotifButton>User Parameters :</MotifButton></Panel>
        <span />
        <Panel $pale><Field fill label="User Parameters" value="no_hasl" tone="pale" /></Panel>
      </FormRow>
      <TableFrame>
        <Tools>
          <colgroup>{widths.map((w, i) => <col key={i} width={w} />)}</colgroup>
          <thead><tr>{headings.map((h, i) => <th key={i} scope="col">{h}</th>)}</tr></thead>
          <tbody>
            {tools.map((t, i) => (
              <tr key={t.id}>
                <Td><ToolSymbol tag={t.tag} /></Td>
                <Td><CellFill><ToolButtonCell $hot={i === 0}>{t.id}</ToolButtonCell></CellFill></Td>
                <Td $right>{t.count}</Td>
                <Td $tone="#fff"><CellFill><Field fill label={`${t.id} slot length`} value="" tone="white" /></CellFill></Td>
                <Td $tone={CREAM}><CellFill><Choice cream label={`${t.id} type`} value={t.type} /></CellFill></Td>
                <Td $tone={CREAM} $active={i === 0}><CellFill><Field fill bare={i === 0} label={`${t.id} finish size`} value={t.finish} tone="cream" /></CellFill></Td>
                <Td $tone={CREAM}><CellFill><Field fill label={`${t.id} plus tolerance`} value={t.plus} tone="cream" /></CellFill></Td>
                <Td $tone={CREAM}><CellFill><Field fill label={`${t.id} minus tolerance`} value={t.minus} tone="cream" /></CellFill></Td>
                <Td $tone="#fff"><CellFill><Field fill label={`${t.id} drill size`} value={t.drill} tone="white" /></CellFill></Td>
                <Td $tone="#fff"><CellFill><Field fill label={`${t.id} drill designator`} value="" tone="white" /></CellFill></Td>
                <Td />
              </tr>
            ))}
            <tr>
              <Td /><Td><CellFill><ToolButtonCell>Total</ToolButtonCell></CellFill></Td><Td $right>552</Td>
              {widths.slice(3).map((_, i) => <Td key={i} />)}
            </tr>
          </tbody>
        </Tools>
      </TableFrame>
      <Trough>
        <svg width="13" height="11"><path d="M11.500 .5v10L1 5.500z" fill={GREEN} stroke="#a5ecd9" /><path d="M1 5.500l10.500 5v-10" fill="none" stroke="#2a7a66" /></svg>
        <Thumb aria-label="Scroll table" />
        <svg width="13" height="11"><path d="M1.500 .5v10L12 5.500z" fill={GREEN} stroke="#a5ecd9" /></svg>
      </Trough>
      <FormRow $cols="42px 2px 60px 35px 35px 48px 122px 1px 30px 30px 30px 1fr 89px 114px" $h={35}>
        <ToolTag>T01</ToolTag>
        <span />
        <Panel><MotifButton>First</MotifButton></Panel>
        <Panel><MotifButton>&lt;--</MotifButton></Panel>
        <Panel><MotifButton>--&gt;</MotifButton></Panel>
        <Panel><MotifButton>Last</MotifButton></Panel>
        <Panel><span>Index:</span><Field fill label="Index" value="" tone="green" /></Panel>
        <span />
        <Panel><MotifButton aria-label="Highlight"><Ico w={18}><rect x="1" y="1" width="16" height="15" stroke="#000" /><path d="M7 12h4v2H7zM7 11q-2-3-2-5 1-4 4-4t4 4q0 2-2 5" stroke="#000" /></Ico></MotifButton></Panel>
        <Panel><MotifButton aria-label="Route"><Ico w={18}><rect x="1" y="1" width="16" height="15" stroke="#000" /><path d="M13 4H6l2 3h5v4H5M3 14l2-2 2 2 2-2 2 2 2-2" stroke="#000" /></Ico></MotifButton></Panel>
        <Panel><MotifButton aria-label="Clear highlight"><Ico w={18}><rect x="1" y="1" width="16" height="15" stroke="#000" /><path d="M7 11q-2-3-2-5 1-3 4-3t4 3q0 2-2 5v3H7z" stroke="#000" /><path d="M2 2l14 13M16 2L2 15" stroke="#d01818" strokeWidth="1.500" /></Ico></MotifButton></Panel>
        <span />
        <Panel $pale><Choice label="Units" value="ml/my" /></Panel>
        <Panel $pale><Choice label="Mode" value="Regular" /></Panel>
      </FormRow>
      <FormRow $cols="1fr 132px 361px 57px" $h={34} $gapAbove>
        <Panel />
        <Panel><MotifButton>Combine Tools</MotifButton></Panel>
        <Panel $pale><span>&nbsp;Merge Tools :&nbsp;</span><Choice label="Merge Tools" value="Update Tools Numbers" /></Panel>
        <Panel><MotifButton>Merge</MotifButton></Panel>
      </FormRow>
      <FormRow $cols="repeat(4, 1fr)" $h={30}>
        {['Apply', 'Calc Drills', 'Update Table', 'Close'].map(t => <Panel key={t}><MotifButton>{t}</MotifButton></Panel>)}
      </FormRow>
    </Client>
  </Dialog>
);

const Ink = () => (
  <Sheet style={{ pointerEvents: 'none' }} aria-hidden="true">
    <g fill="none" stroke="#ffff14" strokeWidth="4">
      <path d="M1215 209l37 3h52l31 4h37l38 6 31 5h28" />
      <path d="M981 394l28-1 32-5h92" />
    </g>
  </Sheet>
);

/* ---------- taskbar icons ---------- */
const taskIcons: { icon: ReactNode; stack?: boolean; bright?: boolean }[] = [
  { icon: <Ico w={34}><path d="M17 31L2 16q0-7 5-9l3-4 6-1 7 1 5 5 4 7-4 9z" fill="#f4b64e" stroke="#c87a1c" /><path d="M16 30L7 8M17 30l-4-27M17 30l3-27M17 30l9-22M17 30L4 15M17 30l13-15" stroke="#fff0c0" /><path d="M20 15l2 5 6 0-4 4 2 6-6-3-5 3 1-6-4-4 6 0z" fill="#ee7a1b" stroke="#b94c05" /></Ico> },
  { icon: <Ico w={28} h={32}><rect x="2" y="2" width="24" height="28" rx="2" fill="#e8f6fc" stroke="#7cc3de" /><path d="M5 7h18M5 11h18M5 15h18M5 19h18M5 23h18M5 27h18" stroke="#2c93c0" strokeWidth="1.500" /></Ico> },
  { icon: <Ico w={32}><path d="M1 1h30v30H3l-2-2z" fill="#1c39c8" stroke="#0c1c80" /><path d="M9 1h13v11H9z" fill="#cfd4e6" stroke="none" /><path d="M17 3h3v7h-3z" fill="#1c39c8" stroke="none" /><path d="M5 15h22v16H5z" fill="#fff" stroke="none" /><path d="M6 19h20M6 23h20M6 27h10" stroke="#c03030" /><text x="17" y="30" fontSize="9" fill="#000" stroke="none">64</text></Ico> },
  { icon: <Ico w={34}><path d="M29 3q-2 5-9 6-9 1-11 9-1 8 6 8 6 0 8-6h-5l2-4h9q-1 15-14 15Q3 31 3 20 5 7 16 5q8-1 13-2z" fill="#e02c1c" stroke="#981408" /></Ico> },
  { icon: <Ico w={34}><path d="M6 3h6v22l-6 4z" fill="#9fc8a6" stroke="#2c8045" /><path d="M10 4h12q9 2 8 9-1 8-10 8h-4l-2 10h-5l4-16h9q3-1 2-4-1-2-5-2h-9z" fill="#1a9448" stroke="none" /></Ico> },
  { icon: <Ico w={34}><path d="M3 9l6-6 4 6z" fill="#3fd0cc" stroke="#134" /><ellipse cx="19" cy="19" rx="13" ry="11" fill="#123c56" stroke="#0a2030" /><ellipse cx="20" cy="18" rx="9" ry="7" stroke="#2fd0c4" strokeWidth="2.500" /><circle cx="20" cy="18" r="3" fill="#f0e23a" stroke="none" /><path d="M3 17q1 12 14 14" stroke="#8cc" strokeWidth="3" /></Ico> },
  { icon: <Ico w={32}><path d="M2 2h7l21 28h-7z" fill="#8a1a94" stroke="#111" /><path d="M28 2L4 30" stroke="#111" strokeWidth="2.500" /></Ico>, stack: true, bright: true },
  { icon: <Ico w={34}><path d="M1 1h16v32H1z" fill="#b01c24" stroke="#eee" /><path d="M17 1h16v32H17z" fill="#555" stroke="#eee" /><circle cx="17" cy="17" r="9" fill="#fff" stroke="#fff" /><circle cx="17" cy="17" r="4.500" stroke="#222" strokeWidth="2" /><path d="M17 5v24M5 17h24" stroke="#222" /></Ico>, stack: true },
  { icon: <Ico w={34}><path d="M2 9q1-6 8-7h7v28H3z" fill="#5a86cc" stroke="#2b4f94" /><path d="M10 6h21v25H10z" fill="#f6f8fc" stroke="#8aa2cc" /><path d="M12 12l3 10 4-8 3 8 4-10" stroke="#2556a8" strokeWidth="2.500" /><path d="M13 26h16M13 28.500h16" stroke="#8aa2cc" /></Ico> },
  { icon: <Ico w={34}><path d="M2 9q1-6 8-7h9v28H3z" fill="#6cae4e" stroke="#3c7a24" /><path d="M8 7h15v19H8z" fill="#f4faf0" stroke="#6ea054" /><path d="M11 11l8 11M19 11l-8 11" stroke="#3a8a1c" strokeWidth="3" /><path d="M20 17h12v14H20z" fill="#fff" stroke="#5b9c3c" /><path d="M20 21.500h12M20 26.500h12M26 17v14" stroke="#5b9c3c" strokeWidth="2" /></Ico>, stack: true },
  { icon: <Ico w={34}><path d="M3 9l6-6 4 6z" fill="#3fd0cc" stroke="#134" /><ellipse cx="19" cy="19" rx="13" ry="11" fill="#123c56" stroke="#0a2030" /><ellipse cx="20" cy="18" rx="9" ry="7" stroke="#2fd0c4" strokeWidth="2.500" /><circle cx="20" cy="18" r="3" fill="#f0e23a" stroke="none" /><path d="M3 17q2 10 14 13" stroke="#b66" strokeWidth="3" /></Ico> },
  { icon: <Ico w={34}><circle cx="17" cy="17" r="15.500" fill="#2391e6" stroke="none" /><path d="M9 7q9 4 16 6 1 3-2 6h3l-8 9 1-6h-3l1-3q-6-1-6-5l3 0Q9 12 9 7z" fill="#fff" stroke="none" /></Ico>, bright: true },
];
const names = ['Shell', 'Notes', 'Disk 64', 'Genesis', 'Pads', 'Engine', 'X server', 'Viewer', 'Word', 'Excel', 'Engine 2', 'Bird'];

const tabEdge = (w: number, on?: boolean) => (
  <svg width={w} height="20" aria-hidden="true"><path d={on ? `M0 0l8 19.500h${w - 15}l7-19.500` : `M1 19.500h${w - 9}l8-19.500`} fill={on ? '#fff' : 'none'} stroke="#999" /></svg>
);

export default function App() {
  return (
    <Page>
      <Global />
      <TitleBar>
        <QuickBar>
          <QuickButton aria-label="Open"><Ico><path d="M1 2h5l2 2h6v2H4L1 13z" fill="#fff" stroke="none" /><path d="M4 6h12l-2 8H1z" fill="#fff" stroke="none" /></Ico></QuickButton>
          <QuickButton $narrow aria-label="Open recent"><Drop c="#fff" /></QuickButton>
          <QuickButton $dim aria-label="Undo"><Ico><path d="M6 2L2 6l4 4M2 6h8q4 0 4 4t-5 4" stroke="#fff" strokeWidth="2" /></Ico></QuickButton>
          <QuickButton $dim aria-label="Redo"><Ico><path d="M10 2l4 4-4 4M14 6H6q-4 0-4 4t5 4" stroke="#fff" strokeWidth="2" /></Ico></QuickButton>
          <QuickButton aria-label="Save"><Ico><path d="M1 1h14v14H1z" fill="#fff" stroke="none" /><path d="M4 2h8v5H4zM4 10h8v4H4z" fill="#087868" stroke="none" /><path d="M6 11h2v3H6z" fill="#fff" stroke="none" /></Ico></QuickButton>
          <QuickButton aria-label="Print"><Ico><path d="M4 0h8v4H4zM0 5h16v7h-3v-2H3v2H0zM4 11h8v5H4z" fill="#fff" stroke="none" /><path d="M5.500 13h5M3 7.500h2" stroke="#087868" /></Ico></QuickButton>
          <QuickButton aria-label="Batch print"><Ico><path d="M2 3h5v3H2zM0 7h13v6h-2v-2H3v2H0zM3 12h8v4H3z" fill="#fff" stroke="none" /><circle cx="12" cy="4.500" r="4.500" fill="#fff" stroke="#087868" /><path d="M10 4l2 2 3-4" stroke="#087868" strokeWidth="1.400" /></Ico></QuickButton>
          <QuickButton aria-label="Preview"><Ico><path d="M12.500 7V4l-3-3h-8v14h8" stroke="#fff" strokeWidth="1.500" /><circle cx="9" cy="9" r="3.500" stroke="#fff" strokeWidth="1.500" /><circle cx="9" cy="9" r="1" fill="#fff" stroke="none" /><path d="M11.500 12l4 4" stroke="#fff" strokeWidth="2" /></Ico></QuickButton>
          <QuickButton $narrow aria-label="Customize"><svg width="6" height="8"><path d="M0 0h6v1H0zM0 3h6L3 7z" fill="#fff" /></svg></QuickButton>
        </QuickBar>
        <TitleText>AT-1503-101-050-rdme.dwg - 看图纸(CADSee Plus) 2020</TitleText>
        <WindowButtons>
          <WindowButton aria-label="Ribbon options"><svg width="14" height="12" fill="none" stroke="#fff"><path d="M.5 1h13v9.500H.5zM1 3h12M7 9.500V4.500M5 6.500l2-2 2 2" /></svg></WindowButton>
          <WindowButton aria-label="Minimize"><svg width="8" height="8"><path d="M1 5h6v2H1z" fill="#fff" /></svg></WindowButton>
          <WindowButton aria-label="Restore"><svg width="10" height="10" fill="none" stroke="#fff" strokeWidth="1.500"><path d="M1 4h5v4.500H1zM3.500 4V1h5v5H6" /></svg></WindowButton>
          <WindowButton aria-label="Close"><svg width="10" height="10" stroke="#fff" strokeWidth="2"><path d="M1.500 1.500l7 7M8.500 1.500l-7 7" /></svg></WindowButton>
        </WindowButtons>
      </TitleBar>

      <MenuBar>
        {['文件', '主页(H)', '浏览(V)', '绘图(D)', '审图(M)', '转换(C)', '网盘(N)'].map(t => <MenuTab key={t} $active={t === '浏览(V)'}>{t}</MenuTab>)}
        <MenuTools>
          <ToolButton aria-label="Collapse ribbon"><svg width="8" height="6" fill="none" stroke="#666" strokeWidth="2"><path d="M1 5l3-3 3 3" /></svg></ToolButton>
          <ToolButton aria-label="Settings"><Ico w={12} h={16}><path d="M1 1v5l3 3v6q2 2 4 0V9l3-3V1L8 1v4H4V1z" fill="#4079b5" stroke="none" /></Ico></ToolButton>
          <Drop />
          <ToolButton aria-label="Pointer"><Pointer /></ToolButton>
          <Drop />
          <ToolButton aria-label="Help"><Ico><circle cx="8" cy="8" r="8" fill="#3f74ad" stroke="none" /><text x="8" y="13" fontSize="13" fontWeight="700" textAnchor="middle" fill="#fff" stroke="none">?</text></Ico></ToolButton>
          <ToolButton aria-label="Account"><Ico w={16}><path d="M3.500 9v6.500h9V9z" fill="#2aa0e8" stroke="#0e5fa0" /><path d="M6 11h4v3H6z" fill="#fff" stroke="none" /><rect x="3.500" y=".5" width="9" height="9" rx="3" fill="#ffc21a" stroke="#b37400" /></Ico></ToolButton>
        </MenuTools>
      </MenuBar>

      <Ribbon />

      <DocTabs>
        <StartTab>起始页</StartTab>
        <DocTab>
          <Ico><rect width="16" height="16" fill="#0f7fb8" stroke="none" /><rect x="4.500" y="4.500" width="7" height="7" stroke="#fff" /><path d="M8 1v5M8 10v5M1 8h5M10 8h5" stroke="#fff" /></Ico>
          <DocName>AT-1503-101-050-rdme.dwg</DocName>
          <ToolButton aria-label="Close tab"><svg width="9" height="9" stroke="#666" strokeWidth="2"><path d="M1 1l7 7M8 1L1 8" /></svg></ToolButton>
        </DocTab>
        <TabsMore aria-label="All tabs"><Drop w={9} c="#777" /></TabsMore>
      </DocTabs>

      <Workspace>
        <Drawing />
        <Holes />
        <DrillManager />
        <Ink />
      </Workspace>

      <LayoutTabs>
        <PageArrows>
          <svg width="8" height="8" fill="#777"><path d="M0 0h1v8H0zM7 0v8L2 4z" /></svg>
          <svg width="8" height="8" fill="#777"><path d="M6 0v8L1 4z" /></svg>
          <svg width="8" height="8" fill="#777"><path d="M2 0v8l5-4z" /></svg>
          <svg width="8" height="8" fill="#777"><path d="M1 0v8l5-4zM7 0h1v8H7z" /></svg>
        </PageArrows>
        <LayoutTab $active $w={56}>{tabEdge(56, true)}<span>Model</span></LayoutTab>
        <LayoutTab $w={60}>{tabEdge(60)}<span>Layout1</span></LayoutTab>
        <LayoutTab $w={60}>{tabEdge(60)}<span>Layout2</span></LayoutTab>
      </LayoutTabs>
      <StatusBar>
        <span>就绪</span>
        <StatusRight><span>坐标 X=16.21 Y=20.91</span><NewsLink href="#news">CAD开发控件V7.1发布，新增图纸打印和大量开发接口！</NewsLink></StatusRight>
      </StatusBar>

      <TaskBar>
        <TaskItems>
          <StartOrb aria-label="Start"><Ico w={38}><circle cx="19" cy="19" r="18" fill="#1c6098" stroke="#12344f" /><ellipse cx="19" cy="11" rx="14" ry="9" fill="#8fc3e3" opacity=".6" stroke="none" /><path d="M10 12q4-3 8 0l-1 6q-4-2-8 0z" fill="#f0602c" stroke="none" /><path d="M20 12q4 3 8 0l-1 6q-4 3-8 0z" fill="#8cc63f" stroke="none" /><path d="M9 20q4-3 8 0l-1 6q-4-2-8 0z" fill="#3fa9f5" stroke="none" /><path d="M19 20q4 3 8 0l-1 6q-4 3-8 0z" fill="#ffd23c" stroke="none" /></Ico></StartOrb>
          {taskIcons.map((t, i) => <TaskButton key={i} $stack={t.stack} $bright={t.bright} aria-label={names[i]}>{t.icon}</TaskButton>)}
        </TaskItems>
        <Tray>
          <Ico w={15} h={14}><path d="M2 5q3-4 6-2t5-2" stroke="#ddd" /><rect x=".5" y="6" width="14" height="7.500" fill="#ddd" stroke="none" /><path d="M2 8.500h11M2 10.500h11" stroke="#555" strokeDasharray="1 1" /></Ico>
          <Ico w={16}><circle cx="8" cy="8" r="7" fill="#1a2fc0" stroke="#ccd" /><text x="8" y="12" fontSize="11" fontWeight="700" textAnchor="middle" fill="#fff" stroke="none">?</text></Ico>
          <TrayStack><svg width="8" height="7" fill="none" stroke="#fff"><path d="M.5 2.500h4v4h-4zM2.500 2v-1.500h5v4H5" /></svg><Drop c="#fff" /></TrayStack>
          <svg width="8" height="6"><path d="M0 5h8L4 1z" fill="#fff" /></svg>
          <Ico w={16}><path d="M1 5h3l4-4v14l-4-4H1z" fill="#fff" stroke="none" /><path d="M10 5q2 3 0 6M12 3q4 5 0 10" stroke="#fff" /></Ico>
          <Ico w={16}><path d="M1.500 1v15" stroke="#fff" strokeWidth="2" /><path d="M3 2h9v7H3z" fill="#fff" stroke="none" /><circle cx="11" cy="11" r="4.500" fill="#e03020" stroke="none" /><path d="M9 9l4 4M13 9l-4 4" stroke="#fff" strokeWidth="1.500" /></Ico>
          <Ico w={16}><path d="M5.500 4.500h9v8h-9zM7 15h6M10 13v2" stroke="#fff" strokeWidth="1.500" /><path d="M1 1v4h4V1M3 5v6h2" stroke="#fff" strokeWidth="1.300" /></Ico>
          <Clock>16:53<br />2021/11/4</Clock>
          <ShowDesktop aria-label="Show desktop" />
        </Tray>
      </TaskBar>
    </Page>
  );
}
